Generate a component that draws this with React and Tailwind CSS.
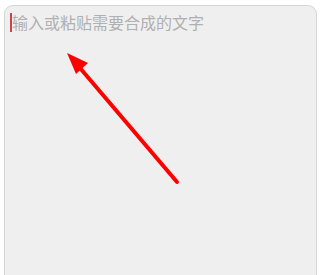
import React from 'react';

/* text input box with annotation arrow */
const App = () => {
    return (
        <div className="relative w-[320px] h-[275px] bg-white overflow-hidden">
            <div className="ml-[4px] mt-[5px] w-[313px] h-[300px] rounded-[9px] border border-[#d6d6d6] bg-[#efefef]">
                <div className="flex items-center pl-[5px] pt-[5px]" style={{ fontFamily: '"Noto Sans CJK SC", sans-serif' }}>
                    <span className="w-[2px] h-[19px] bg-[#d0414e]" />
                    <span className="text-[16px] leading-[22px] text-[#b0b0b0]">输入或粘贴需要合成的文字</span>
                </div>
            </div>

            {/* red arrow pointing at the input */}
            <svg className="absolute left-0 top-0" width="320" height="275" viewBox="0 0 320 275">
                <line x1="177" y1="182" x2="80" y2="68" stroke="#ff0000" strokeWidth="4" strokeLinecap="round" />
                <polygon points="67,53 88,63 76,74" fill="#ff0000" />
            </svg>
        </div>
    )
}

export default App
